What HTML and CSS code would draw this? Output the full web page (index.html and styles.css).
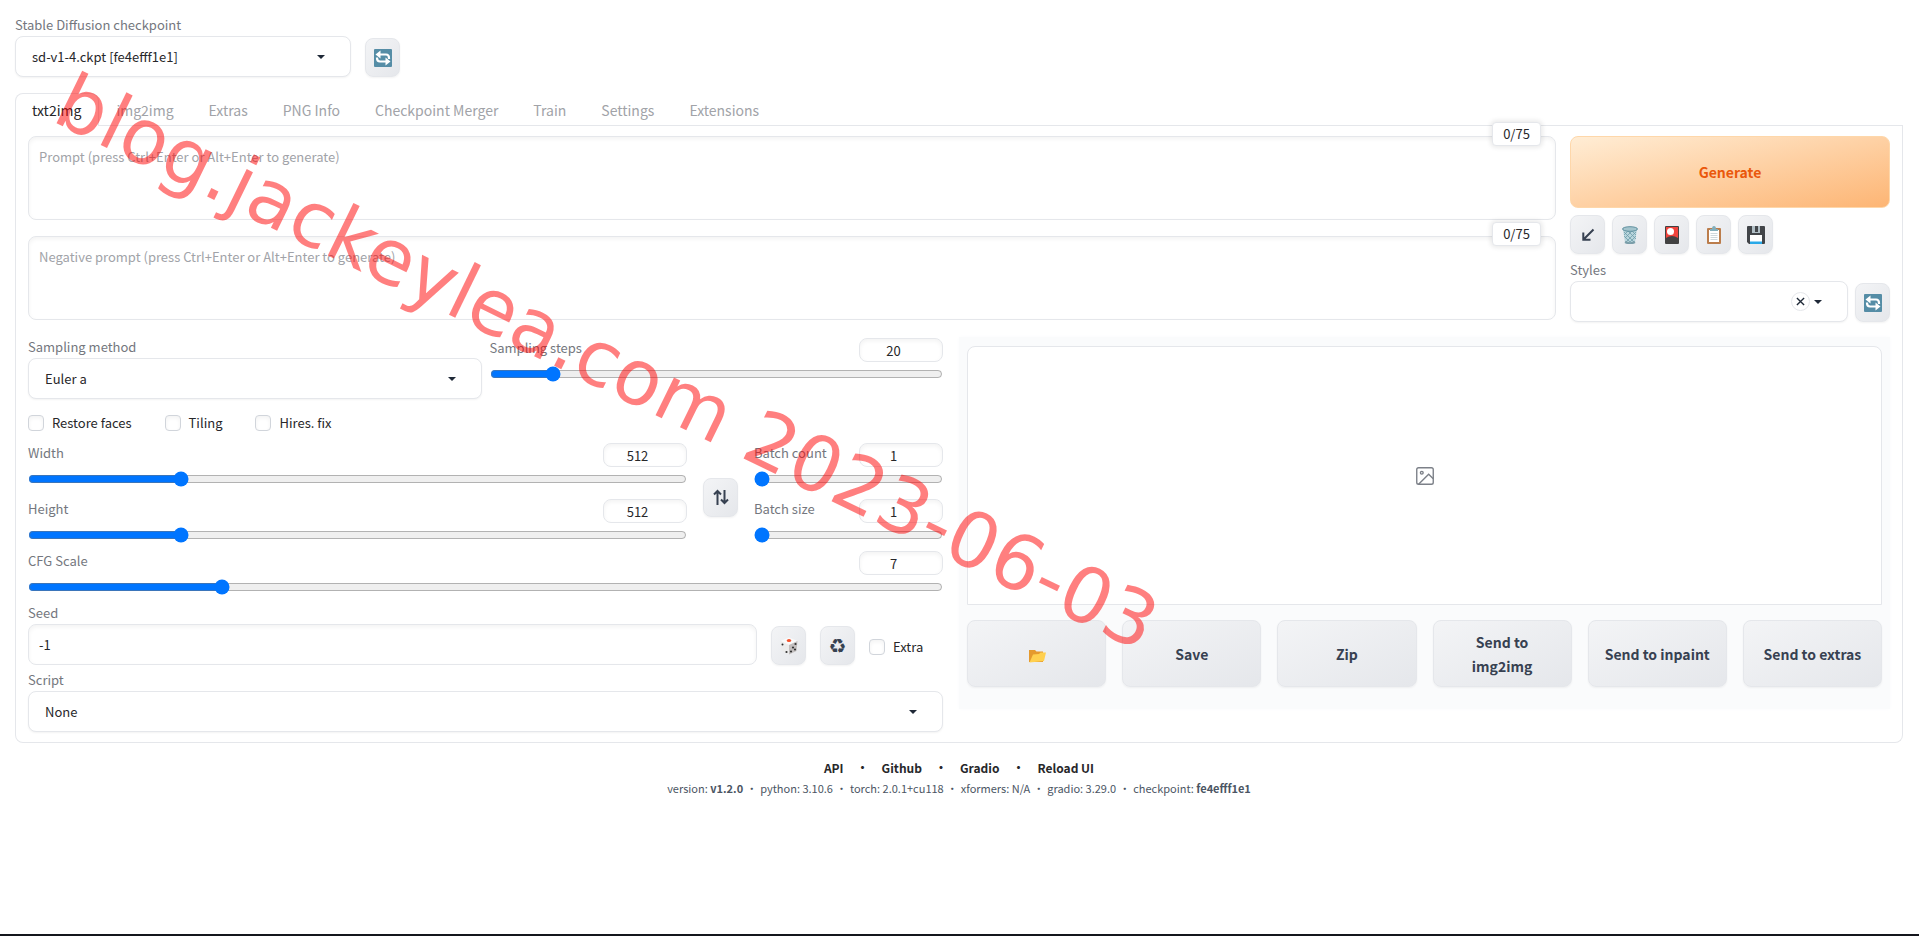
FILE: index.html
```html
<!DOCTYPE html>
<html>
	<head>
		<meta charset="utf-8" />
		<title>Stable Diffusion</title>
		<link rel="stylesheet" href="styles.css">
	</head>
	<body>
		<svg class="defs" aria-hidden="true">
			<symbol id="i-refresh" viewBox="0 0 18 18">
				<rect width="18" height="18" rx="1" fill="#558da6"/>
				<path d="M5 5.500H12Q15 5.500 15 9V10" fill="none" stroke="#fff" stroke-width="2.200"/>
				<path d="M6.500 1.500v8L1.500 5.500z" fill="#fff"/>
				<path d="M13 12.500H6Q3 12.500 3 9V8.500" fill="none" stroke="#fff" stroke-width="2.200"/>
				<path d="M11.500 8.500v8l5-4z" fill="#fff"/>
			</symbol>
			<symbol id="i-arrow" viewBox="0 0 18 18">
				<path d="M14.500 3.500 5 13M4.300 6.500v7.200H11.500" fill="none" stroke="#374151" stroke-width="2"/>
			</symbol>
			<symbol id="i-trash" viewBox="0 0 18 18">
				<path d="M2 3.500 4 16.500q5 2 10 0L16 3.500z" fill="#b9d5dc"/>
				<path d="M3 6l10 10M3 10l6 6M7 5l8 8M11 5l4 4M15 6 5 16M15 10l-6 6M11 5l-7 7M7 5 3 9" stroke="#6f9dab" stroke-width=".8" fill="none"/>
				<ellipse cx="9" cy="3" rx="7.500" ry="2.300" fill="#a3c4cd" stroke="#5f909f"/>
				<path d="M4 16q5 2.500 10 0" stroke="#7b9ea9" stroke-width="2" fill="none"/>
			</symbol>
			<symbol id="i-card" viewBox="0 0 18 18">
				<rect x="2" width="14" height="18" rx="1" fill="#424242"/>
				<path d="M3 1h12v11Q9 8 3 12z" fill="#f0433c"/>
				<circle cx="7.500" cy="5.500" r="3.500" fill="#fff"/>
			</symbol>
			<symbol id="i-clip" viewBox="0 0 18 18">
				<rect x="2" y="2" width="14" height="16" rx="1" fill="#bb7d4c"/>
				<rect x="4" y="4" width="10" height="12" fill="#fff"/>
				<path d="M5 5V3h2q0-3 2-3t2 3h2v2z" fill="#82aebb"/>
				<path d="M5.500 7.500h7M5.500 9.500h7M5.500 11.500h7M5.500 13.500h7" stroke="#cfd8dc"/>
			</symbol>
			<symbol id="i-disk" viewBox="0 0 18 18">
				<path d="M0 1q0-1 1-1h16q1 0 1 1v16q0 1-1 1H2l-2-2z" fill="#424549"/>
				<path d="M5 0h8v7H5z" fill="#b0bec5"/>
				<path d="M8 0h3v6H8z" fill="#424549"/>
				<path d="M3 9h12v9H3z" fill="#fff"/>
				<path d="M3 15.500h12V18H3z" fill="#29a9e8"/>
			</symbol>
			<symbol id="i-swap" viewBox="0 0 18 18">
				<path d="M5.500 17V3M2 6.500l3.500-3.500L9 6.500M12.500 2v13M9 11.500l3.500 3.500 3.500-3.500" fill="none" stroke="#374151" stroke-width="2"/>
			</symbol>
			<symbol id="i-dice" viewBox="0 0 18 18">
				<path d="M9 .5 17.500 4 9 8 .5 4z" fill="#fafafa"/>
				<path d="M.5 4 9 8v9.500L1.500 14z" fill="#ececec"/>
				<path d="M17.500 4 9 8v9.500L16.500 14z" fill="#c2bebe"/>
				<ellipse cx="9" cy="3.500" rx="2.200" ry="1.500" fill="#f4512c"/>
				<g fill="#333"><circle cx="2.500" cy="7.500" r="1"/><circle cx="6.500" cy="15" r="1.100"/><circle cx="15.500" cy="7" r="1.100"/><circle cx="13" cy="10.500" r="1.100"/><circle cx="11" cy="14.500" r="1.100"/><circle cx="15" cy="12.500" r="1.100"/></g>
			</symbol>
			<symbol id="i-folder" viewBox="0 0 18 18">
				<path d="M1 3h6l1.500 1.500H15V15H1z" fill="#e59a2e"/>
				<path d="M1.500 15.500 5 7.500 11 7l1.500-1.500H18L16 14z" fill="#ffd04f"/>
			</symbol>
			<symbol id="i-image" viewBox="0 0 24 24">
				<g fill="none" stroke="#7c8088" stroke-width="1.500">
					<rect x="3" y="3" width="18" height="18" rx="2"/>
					<circle cx="8.500" cy="8.500" r="1.500"/>
					<path d="M21 15 16 10 5 21"/>
				</g>
			</symbol>
		</svg>

		<div class="page">
			<div class="checkpoint">
				<div class="field">
					<label for="ckpt">Stable Diffusion checkpoint</label>
					<div class="dropdown"><select id="ckpt"><option>sd-v1-4.ckpt [fe4efff1e1]</option></select></div>
				</div>
				<button class="tool" type="button" aria-label="Refresh checkpoints"><svg><use href="#i-refresh"/></svg></button>
			</div>

			<div class="tabs">
				<div class="tab-nav">
					<button type="button" class="tab selected">txt2img</button>
					<button type="button" class="tab">img2img</button>
					<button type="button" class="tab">Extras</button>
					<button type="button" class="tab">PNG Info</button>
					<button type="button" class="tab">Checkpoint Merger</button>
					<button type="button" class="tab">Train</button>
					<button type="button" class="tab">Settings</button>
					<button type="button" class="tab">Extensions</button>
				</div>

				<div class="tab-body">
					<div class="toprow">
						<div class="prompts">
							<div class="prompt">
								<textarea aria-label="Prompt" placeholder="Prompt (press Ctrl+Enter or Alt+Enter to generate)"></textarea>
								<span class="counter">0/75</span>
							</div>
							<div class="prompt">
								<textarea aria-label="Negative prompt" placeholder="Negative prompt (press Ctrl+Enter or Alt+Enter to generate)"></textarea>
								<span class="counter">0/75</span>
							</div>
						</div>
						<div class="actions">
							<button type="button" class="generate">Generate</button>
							<div class="tools">
								<button class="tool" type="button" aria-label="Read parameters"><svg><use href="#i-arrow"/></svg></button>
								<button class="tool" type="button" aria-label="Clear prompt"><svg><use href="#i-trash"/></svg></button>
								<button class="tool" type="button" aria-label="Extra networks"><svg><use href="#i-card"/></svg></button>
								<button class="tool" type="button" aria-label="Apply styles"><svg><use href="#i-clip"/></svg></button>
								<button class="tool" type="button" aria-label="Save style"><svg><use href="#i-disk"/></svg></button>
							</div>
							<div class="styles-row">
								<div class="field">
									<label for="styles">Styles</label>
									<div class="dropdown">
										<select id="styles"><option></option></select>
										<button type="button" class="clear" aria-label="Clear styles"><svg viewBox="0 0 10 10"><path d="M1 1 9 9M9 1 1 9" stroke="#1f2937" stroke-width="1.500"/></svg></button>
									</div>
								</div>
								<button class="tool" type="button" aria-label="Refresh styles"><svg><use href="#i-refresh"/></svg></button>
							</div>
						</div>
					</div>

					<div class="columns">
						<div class="settings">
							<div class="sampler">
								<div class="field">
									<label for="method">Sampling method</label>
									<div class="dropdown"><select id="method"><option>Euler a</option></select></div>
								</div>
								<div class="slider">
									<div class="slider-head"><label for="steps">Sampling steps</label><input type="number" aria-label="Sampling steps value" value="20"></div>
									<input id="steps" type="range" min="1" max="150" value="20">
								</div>
							</div>

							<div class="checks">
								<label><input type="checkbox">Restore faces</label>
								<label><input type="checkbox">Tiling</label>
								<label><input type="checkbox">Hires. fix</label>
							</div>

							<div class="dimensions">
								<div class="sliders">
									<div class="slider">
										<div class="slider-head"><label for="width">Width</label><input type="number" aria-label="Width value" value="512"></div>
										<input id="width" type="range" min="64" max="2048" step="8" value="512">
									</div>
									<div class="slider">
										<div class="slider-head"><label for="height">Height</label><input type="number" aria-label="Height value" value="512"></div>
										<input id="height" type="range" min="64" max="2048" step="8" value="512">
									</div>
								</div>
								<button class="tool" type="button" aria-label="Switch width and height"><svg><use href="#i-swap"/></svg></button>
								<div class="sliders batch">
									<div class="slider">
										<div class="slider-head"><label for="count">Batch count</label><input type="number" aria-label="Batch count value" value="1"></div>
										<input id="count" type="range" min="1" max="100" value="1">
									</div>
									<div class="slider">
										<div class="slider-head"><label for="size">Batch size</label><input type="number" aria-label="Batch size value" value="1"></div>
										<input id="size" type="range" min="1" max="8" value="1">
									</div>
								</div>
							</div>

							<div class="slider">
								<div class="slider-head"><label for="cfg">CFG Scale</label><input type="number" aria-label="CFG Scale value" value="7"></div>
								<input id="cfg" type="range" min="1" max="30" step="0.5" value="7">
							</div>

							<div class="seed">
								<div class="field">
									<label for="seed">Seed</label>
									<input id="seed" class="textbox" type="text" value="-1">
								</div>
								<button class="tool" type="button" aria-label="Random seed"><svg><use href="#i-dice"/></svg></button>
								<button class="tool recycle" type="button" aria-label="Reuse seed">&#x267B;&#xFE0E;</button>
								<label class="extra"><input type="checkbox">Extra</label>
							</div>

							<div class="field script">
								<label for="script">Script</label>
								<div class="dropdown"><select id="script"><option>None</option></select></div>
							</div>
						</div>

						<div class="results">
							<div class="gallery"><svg><use href="#i-image"/></svg></div>
							<div class="result-buttons">
								<button type="button" aria-label="Open folder"><svg><use href="#i-folder"/></svg></button>
								<button type="button">Save</button>
								<button type="button">Zip</button>
								<button type="button">Send to<br>img2img</button>
								<button type="button">Send to inpaint</button>
								<button type="button">Send to extras</button>
							</div>
						</div>
					</div>
				</div>
			</div>

			<footer>
				<div class="links">
					<a href="#">API</a><span>•</span><a href="#">Github</a><span>•</span><a href="#">Gradio</a><span>•</span><a href="#">Reload UI</a>
				</div>
				<div class="versions">
					<span>version: <b>v1.2.0</b></span><span>•</span><span>python: 3.10.6</span><span>•</span><span>torch: 2.0.1+cu118</span><span>•</span><span>xformers: N/A</span><span>•</span><span>gradio: 3.29.0</span><span>•</span><span>checkpoint: <b>fe4efff1e1</b></span>
				</div>
			</footer>
		</div>

		<div class="watermark">blog.jackeylea.com 2023-06-03</div>
	</body>
</html>
```

FILE: styles.css
```css
* {
	box-sizing: border-box;
}
body {
	margin: 0;
	min-height: 100vh;
	border-bottom: 2px solid #14161d;
	background: #fff;
	color: #27272a;
	font: 13px/20px "Noto Sans CJK SC", "Noto Sans", sans-serif;
	position: relative;
	overflow: hidden;
}
button, input, select, textarea {
	font: inherit;
	color: inherit;
	margin: 0;
}
button {
	padding: 0;
	cursor: pointer;
}
.defs {
	display: none;
}
.page {
	padding: 15px 16px 0 15px;
}

/* fields */
.field {
	flex: 1;
	min-width: 0;
}
.field > label, .slider-head label {
	display: block;
	color: #74777e;
}
.field > label {
	margin-bottom: 1px;
}
.dropdown {
	position: relative;
}
.dropdown select, .textbox {
	display: block;
	width: 100%;
	height: 41px;
	border: 1px solid #e5e7eb;
	border-radius: 8px;
	background: #fff;
	box-shadow: 0 1px 2px rgba(0, 0, 0, .05);
}
.dropdown select {
	appearance: none;
	padding: 0 16px;
}
.dropdown::after {
	content: "";
	position: absolute;
	right: 26px;
	top: 19px;
	border: 4px solid transparent;
	border-top-color: #1f2937;
	border-bottom: 0;
	pointer-events: none;
}
.textbox {
	padding: 0 10px;
	box-shadow: inset 0 2px 4px rgba(0, 0, 0, .05);
}
.tool {
	flex: none;
	display: flex;
	align-items: center;
	justify-content: center;
	width: 35px;
	height: 39px;
	border: 1px solid #e5e7eb;
	border-radius: 8px;
	background: linear-gradient(to bottom right, #f3f4f6, #e5e7eb);
	box-shadow: 0 1px 2px rgba(0, 0, 0, .05);
}
.tool svg {
	width: 18px;
	height: 18px;
}
.recycle {
	color: #374151;
	font: 20px/20px "DejaVu Sans", sans-serif;
}
input[type=checkbox] {
	appearance: none;
	width: 16px;
	height: 16px;
	border: 1px solid #d1d5db;
	border-radius: 4px;
	background: #fff;
	box-shadow: inset 0 2px 4px rgba(0, 0, 0, .05);
}

.checkpoint {
	display: flex;
	align-items: flex-end;
	gap: 14px;
}
.checkpoint .field {
	flex: 0 0 336px;
}

/* tabs */
.tabs {
	margin-top: 16px;
}
.tab-nav {
	display: flex;
	height: 33px;
	border-bottom: 1px solid #e5e7eb;
}
.tab {
	height: 33px;
	padding: 0 17px 0 16px;
	border: 1px solid transparent;
	border-bottom: 0;
	border-radius: 8px 8px 0 0;
	background: none;
	color: #a1a3a8;
	font-size: 14px;
}
.tab.selected {
	border-color: #e5e7eb;
	background: #fff;
	color: #27272a;
}
.tab-body {
	padding: 10px 12px;
	border: 1px solid #e5e7eb;
	border-top: 0;
	border-radius: 0 0 8px 8px;
}
.toprow {
	display: flex;
	gap: 14px;
}
.prompts {
	flex: 1;
	display: flex;
	flex-direction: column;
	gap: 16px;
}
.prompt {
	position: relative;
}
.prompt textarea {
	display: block;
	width: 100%;
	height: 84px;
	padding: 10px;
	border: 1px solid #e5e7eb;
	border-radius: 8px;
	resize: none;
	box-shadow: inset 0 2px 4px rgba(0, 0, 0, .05);
}
.prompt textarea::placeholder {
	color: #a1a3a8;
}
.counter {
	position: absolute;
	top: -14px;
	right: 15px;
	width: 49px;
	border: 1px solid #e5e7eb;
	border-radius: 4px;
	background: #fff;
	box-shadow: 0 0 4px 2px rgba(0, 0, 0, .08);
	line-height: 22px;
	text-align: center;
}
.actions {
	width: 320px;
}
.generate {
	width: 100%;
	height: 72px;
	border: 1px solid #fed7aa;
	border-radius: 8px;
	background: linear-gradient(to bottom right, #ffedd5, #fdb574);
	color: #ea580c;
	font-size: 14px;
	font-weight: 600;
}
.tools {
	display: flex;
	gap: 7px;
	margin: 7px 0 6px;
}
.styles-row {
	display: flex;
	align-items: flex-end;
	gap: 7px;
}
.clear {
	position: absolute;
	top: 11px;
	right: 38px;
	width: 19px;
	height: 19px;
	display: flex;
	align-items: center;
	justify-content: center;
	border: 1px solid #e5e7eb;
	border-radius: 50%;
	background: #fff;
}
.clear svg {
	width: 9px;
	height: 9px;
}

/* generation settings */
.columns {
	display: grid;
	grid-template-columns: calc(50% - 16px) 1fr;
	gap: 16px;
	margin-top: 15px;
}
.sampler {
	display: grid;
	grid-template-columns: 1fr 1fr;
	gap: 8px;
}
.sampler .slider {
	padding-top: 1px;
}
.slider-head {
	display: flex;
	justify-content: space-between;
	height: 24px;
	margin-bottom: 4px;
}
.slider-head input {
	width: 84px;
	height: 24px;
	padding: 0 8px;
	border: 1px solid #e5e7eb;
	border-radius: 8px;
	box-shadow: inset 0 2px 4px rgba(0, 0, 0, .05);
	text-align: center;
}
input[type=range] {
	display: block;
	width: 100%;
	height: 16px;
}
.checks {
	display: flex;
	gap: 33px;
	margin: 14px 0 10px;
}
.checks label, .extra {
	display: flex;
	align-items: center;
	gap: 8px;
}
.dimensions {
	display: flex;
	align-items: center;
	gap: 16px;
	margin-bottom: 8px;
}
.dimensions .tool {
	margin-top: 8px;
}
.sliders {
	flex: 1;
	display: flex;
	flex-direction: column;
	gap: 12px;
}
.sliders.batch {
	flex: 0 0 189px;
}
.seed {
	display: flex;
	align-items: flex-end;
	gap: 14px;
	margin-top: 8px;
}
.extra {
	width: 74px;
	height: 36px;
}
.script {
	margin-top: 5px;
}

/* results */
.results {
	padding: 9px 8px 22px;
	align-self: start;
	background: #fafbfc;
	box-shadow: 0 0 4px #fafbfc;
}
.gallery {
	display: flex;
	align-items: center;
	justify-content: center;
	height: 259px;
	border: 1px solid #e5e7eb;
	border-radius: 8px 8px 0 0;
	background: #fff;
}
.gallery svg {
	width: 22px;
	height: 22px;
}
.result-buttons {
	display: grid;
	grid-template-columns: repeat(6, 1fr);
	gap: 16px;
	margin-top: 15px;
}
.result-buttons button {
	height: 67px;
	padding: 0 8px;
	border: 1px solid #e5e7eb;
	border-radius: 8px;
	background: linear-gradient(to bottom right, #f3f4f6, #e5e7eb);
	box-shadow: 0 1px 2px rgba(0, 0, 0, .05);
	color: #374151;
	font-size: 14px;
	font-weight: 600;
	line-height: 24px;
}
.result-buttons svg {
	width: 18px;
	height: 18px;
	vertical-align: middle;
}

footer {
	margin-top: 15px;
	text-align: center;
}
.links, .versions {
	display: flex;
	justify-content: center;
}
.links {
	gap: 13px;
	font-size: 12px;
	font-weight: 600;
}
.links a {
	color: inherit;
	text-decoration: none;
}
.versions {
	gap: 3px;
	color: #4b5563;
	font-size: 11px;
}

.watermark {
	position: absolute;
	left: 45px;
	top: 54px;
	color: rgba(255, 0, 0, .5);
	font: 77px/77px "DejaVu Sans", sans-serif;
	white-space: nowrap;
	transform: rotate(26deg);
	transform-origin: 0 100%;
	pointer-events: none;
}
```
